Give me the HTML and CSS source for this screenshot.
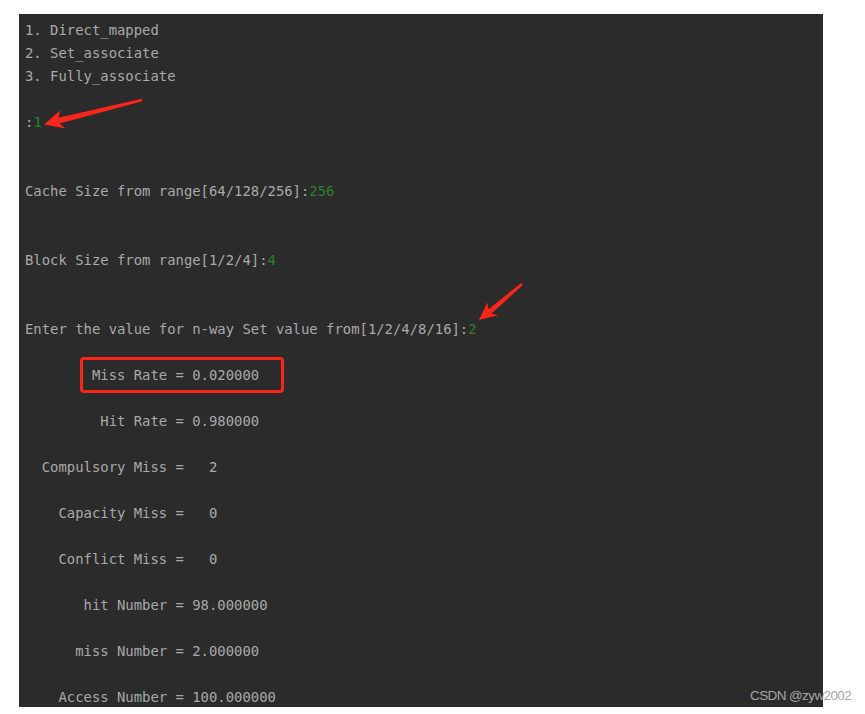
FILE: index.html
```html
<!DOCTYPE html>
<html lang="en">

<head>
    <meta charset="UTF-8">
    <meta name="viewport" content="width=device-width, initial-scale=1.0">
    <title>Cache Simulator Output</title>
    <link rel="stylesheet" href="styles.css">
</head>

<body>
    <div class="console">
        <pre class="line">1. Direct_mapped</pre>
        <pre class="line">2. Set_associate</pre>
        <pre class="line">3. Fully_associate</pre>
        <pre class="line"> </pre>
        <pre class="line">:<span class="input">1</span></pre>
        <pre class="line"> </pre>
        <pre class="line"> </pre>
        <pre class="line">Cache Size from range[64/128/256]:<span class="input">256</span></pre>
        <pre class="line"> </pre>
        <pre class="line"> </pre>
        <pre class="line">Block Size from range[1/2/4]:<span class="input">4</span></pre>
        <pre class="line"> </pre>
        <pre class="line"> </pre>
        <pre class="line">Enter the value for n-way Set value from[1/2/4/8/16]:<span class="input">2</span></pre>
        <pre class="line"> </pre>
        <pre class="line">        <span class="mark">Miss Rate = 0.020000</span></pre>
        <pre class="line"> </pre>
        <pre class="line">         Hit Rate = 0.980000</pre>
        <pre class="line"> </pre>
        <pre class="line">  Compulsory Miss =   2</pre>
        <pre class="line"> </pre>
        <pre class="line">    Capacity Miss =   0</pre>
        <pre class="line"> </pre>
        <pre class="line">    Conflict Miss =   0</pre>
        <pre class="line"> </pre>
        <pre class="line">       hit Number = 98.000000</pre>
        <pre class="line"> </pre>
        <pre class="line">      miss Number = 2.000000</pre>
        <pre class="line"> </pre>
        <pre class="line">    Access Number = 100.000000</pre>
    </div>

    <!-- annotation arrows drawn over the screenshot -->
    <svg class="arrows" width="865" height="714" viewBox="0 0 865 714">
        <polygon points="141.6,98.8 58.5,117.8 60.2,110.5 44,124.5 65.5,128.6 59.5,123.6 142.4,101.2" />
        <polygon points="521.2,283 488.6,309.2 487.2,302.4 479,320 498,315.2 491.6,313.4 522.8,285" />
    </svg>

    <div class="watermark">CSDN @zyw2002</div>
</body>

</html>
```

FILE: styles.css
```css
* {
    margin: 0;
    padding: 0;
    box-sizing: border-box;
}

body {
    background-color: #ffffff;
    width: 865px;
    height: 714px;
    position: relative;
    overflow: hidden;
}

.console {
    margin-top: 14px;
    margin-left: 19px;
    width: 804px;
    height: 693px;
    padding: 5px 6px 0 6px;
    background-color: #2b2b2b;
    overflow: hidden;
}

.line {
    font-family: "DejaVu Sans Mono", "Liberation Mono", monospace;
    font-size: 13.9px;
    line-height: 23px;
    height: 23px;
    color: #a9a9a9;
    white-space: pre;
}

.input {
    color: #2a822a;
}

.mark {
    position: relative;
}

.mark::before {
    content: "";
    position: absolute;
    left: -12px;
    right: -25px;
    top: -10px;
    bottom: -10px;
    border: 3px solid #f8251a;
    border-radius: 4px;
}

.arrows {
    position: absolute;
    left: 0;
    top: 0;
    pointer-events: none;
}

.arrows polygon {
    fill: #f8251a;
}

.watermark {
    position: absolute;
    left: 750px;
    top: 688px;
    font-family: "Liberation Sans", Arial, sans-serif;
    font-size: 13.5px;
    letter-spacing: -0.6px;
    color: #a6a6a6;
}
```
